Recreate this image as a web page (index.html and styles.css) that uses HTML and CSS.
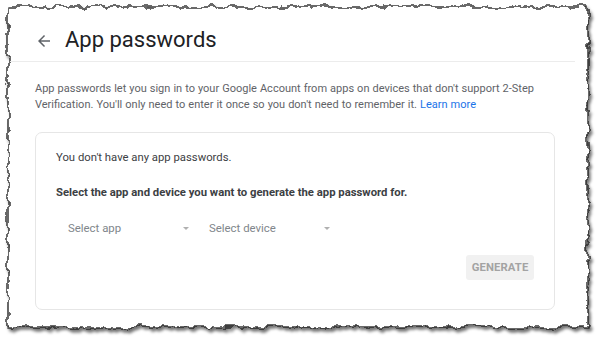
FILE: index.html
```html
<!DOCTYPE html>
<html lang="en">
<head>
<meta charset="utf-8">
<title>App passwords</title>
<link rel="stylesheet" href="styles.css">
</head>
<body>
<div class="sheet">
  <svg class="torn" viewBox="0 0 600 340" aria-hidden="true">
    <defs>
      <filter id="rough" x="-5%" y="-5%" width="110%" height="110%">
        <feTurbulence type="fractalNoise" baseFrequency="0.09" numOctaves="3" seed="7" result="n"/>
        <feDisplacementMap in="SourceGraphic" in2="n" scale="9" xChannelSelector="R" yChannelSelector="G"/>
      </filter>
      <filter id="shadow" x="-5%" y="-5%" width="110%" height="110%">
        <feDropShadow dx="2" dy="3" stdDeviation="1.6" flood-color="#000" flood-opacity="0.55"/>
      </filter>
    </defs>
    <g filter="url(#shadow)">
      <rect x="8" y="7" width="580" height="320" fill="#fff" stroke="#1a1a1a" stroke-width="1.3" filter="url(#rough)"/>
    </g>
  </svg>

  <header class="top">
    <svg class="back" viewBox="0 0 24 24" aria-hidden="true"><path d="M20 11H7.83l5.59-5.59L12 4l-8 8 8 8 1.41-1.41L7.83 13H20v-2z" fill="#5f6368"/></svg>
    <h1 class="title">App passwords</h1>
  </header>

  <p class="intro">App passwords let you sign in to your Google Account from apps on devices that don't support 2-Step Verification. You'll only need to enter it once so you don't need to remember it. <a class="link" href="#">Learn more</a></p>

  <section class="card">
    <p class="none">You don't have any app passwords.</p>
    <p class="lead">Select the app and device you want to generate the app password for.</p>
    <div class="selects">
      <div class="select"><span>Select app</span><i class="caret"></i></div>
      <div class="select"><span>Select device</span><i class="caret"></i></div>
    </div>
    <div class="actions">
      <button class="gen" type="button">GENERATE</button>
    </div>
  </section>
</div>
</body>
</html>
```

FILE: styles.css
```css
* { box-sizing: border-box; }
html, body { margin: 0; padding: 0; background: #fff; }
body {
  font-family: Roboto, "Liberation Sans", Arial, sans-serif;
  width: 600px;
  height: 340px;
  overflow: hidden;
}
.sheet {
  position: relative;
  width: 600px;
  height: 340px;
  padding-top: 20px;
}
.torn {
  position: absolute;
  left: 0;
  top: 0;
  width: 600px;
  height: 340px;
  z-index: 0;
}
.top, .intro, .card { position: relative; z-index: 1; }

.top {
  display: flex;
  align-items: center;
  margin-left: 10px;
  width: 565px;
  height: 42px;
  padding-left: 25px;
  border-bottom: 1px solid #ececec;
}
.back { width: 18px; height: 18px; margin-right: 12px; }
.title {
  margin: 0;
  font-size: 22px;
  font-weight: 400;
  color: #202124;
  line-height: 28px;
  margin-top: -1px;
}
.intro {
  margin: 19px 0 0 35px;
  width: 520px;
  font-size: 11px;
  line-height: 16px;
  word-spacing: 0.3px;
  color: #5f6368;
}
.link { color: #1a73e8; text-decoration: none; }

.card {
  margin: 19px 0 0 35px;
  width: 520px;
  height: 178px;
  border: 1px solid #e6e6e6;
  border-radius: 7px;
  padding: 17px 20px 0 20px;
  display: flex;
  flex-direction: column;
}
.none {
  margin: 0;
  font-size: 11.3px;
  line-height: 16px;
  color: #3c4043;
}
.lead {
  margin: 19px 0 0;
  font-size: 11.3px;
  line-height: 16px;
  font-weight: 700;
  color: #3c4043;
}
.selects {
  display: flex;
  margin-top: 19px;
}
.select {
  display: flex;
  align-items: center;
  justify-content: space-between;
  width: 141px;
  height: 16px;
  padding: 0 8px 0 12px;
  font-size: 11.4px;
  color: #80868b;
}
.caret {
  width: 0;
  height: 0;
  border-left: 3.5px solid transparent;
  border-right: 3.5px solid transparent;
  border-top: 3.5px solid #b0b0b0;
  margin-top: 1px;
}
.actions {
  display: flex;
  justify-content: flex-end;
  margin-top: 19px;
}
.gen {
  width: 68px;
  height: 25px;
  border: 0;
  border-radius: 3px;
  background: #f1f1f1;
  color: #a3a3a3;
  font-family: Roboto, "Liberation Sans", Arial, sans-serif;
  font-size: 11.3px;
  font-weight: 700;
  letter-spacing: 0.1px;
  padding: 0;
}
```
